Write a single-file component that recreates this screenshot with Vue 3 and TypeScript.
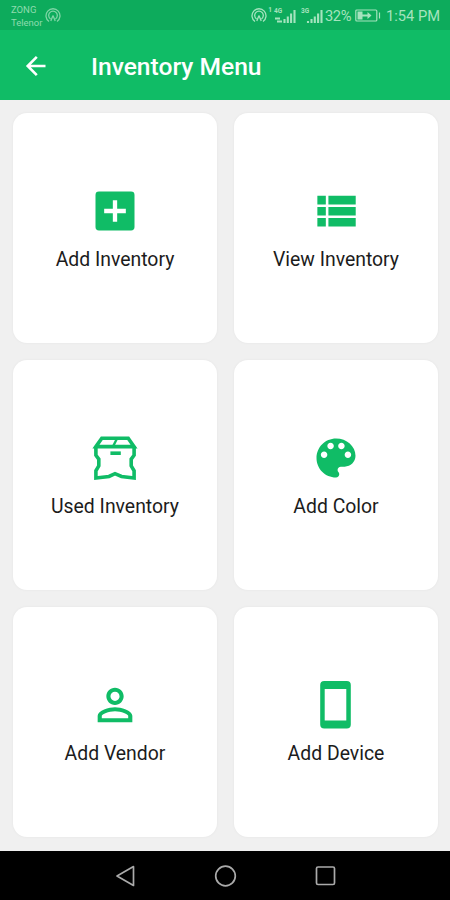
<script setup lang="ts">
type IconName = 'add' | 'list' | 'box' | 'palette' | 'person' | 'phone'

interface MenuItem {
  label: string
  icon: IconName
}

const items: MenuItem[] = [
  { label: 'Add Inventory', icon: 'add' },
  { label: 'View Inventory', icon: 'list' },
  { label: 'Used Inventory', icon: 'box' },
  { label: 'Add Color', icon: 'palette' },
  { label: 'Add Vendor', icon: 'person' },
  { label: 'Add Device', icon: 'phone' },
]
</script>

<template>
  <div class="screen">
    <div class="status">
      <div class="carriers"><span>ZONG</span><span>Telenor</span></div>
      <svg class="hotspot left" viewBox="0 0 16 16">
        <path d="M4 13.5A7 7 0 1 1 12 13.5M5.6 11A4.3 4.3 0 1 1 10.4 11M8 7.5L5.8 13M8 7.5L10.2 13" />
      </svg>
      <div class="spacer"></div>
      <svg class="hotspot" viewBox="0 0 16 16">
        <path d="M4 13.5A7 7 0 1 1 12 13.5M5.6 11A4.3 4.3 0 1 1 10.4 11M8 7.5L5.8 13M8 7.5L10.2 13" />
      </svg>
      <span class="tiny one">1</span>
      <div class="signal">
        <span class="tiny">4G</span>
        <svg viewBox="0 0 23 16"><path d="M2 10.5h5M4 13.5h5M11.5 11v4M14.8 8.5V15M18.1 5.5V15M21.5 2v13" /></svg>
      </div>
      <div class="signal second">
        <span class="tiny">3G</span>
        <svg viewBox="0 0 23 16"><path d="M8 13v2M11.5 11v4M14.8 8.5V15M18.1 5.5V15M21.5 2v13" /></svg>
      </div>
      <span class="percent">32%</span>
      <svg class="battery" viewBox="0 0 26 13">
        <rect x=".8" y="1" width="21" height="11" rx="1" />
        <path d="M24.5 3.5v6" /><path class="charge" d="M2.5 2.5h5v3h5V3l4 3.5-4 3.5V7.5h-5v3h-5z" />
      </svg>
      <span class="clock">1:54 PM</span>
    </div>

    <header class="appbar">
      <svg class="back" viewBox="0 0 24 24">
        <path d="M21.5 12H4M12.8 2.9L3.7 12l9.1 9.1" />
      </svg>
      <h1>Inventory Menu</h1>
    </header>

    <main class="grid">
      <button v-for="item in items" :key="item.label" class="card" type="button">
        <svg v-if="item.icon === 'add'" class="icon" viewBox="0 0 24 24">
          <path fill-rule="evenodd" d="M4.6 3h14.8A1.6 1.6 0 0 1 21 4.6v14.8a1.6 1.6 0 0 1-1.6 1.6H4.6A1.6 1.6 0 0 1 3 19.4V4.6A1.6 1.6 0 0 1 4.6 3zM11 7v4H7v2h4v4h2v-4h4v-2h-4V7z" />
        </svg>
        <svg v-else-if="item.icon === 'list'" class="icon" viewBox="0 0 24 24">
          <path d="M3.4 5h3.9v4H3.4zM8.5 5h12.6v4H8.5zM3.4 10.1h3.9v4H3.4zM8.5 10.1h12.6v4H8.5zM3.4 15.2h3.9v4H3.4zM8.5 15.2h12.6v4H8.5z" />
        </svg>
        <svg v-else-if="item.icon === 'box'" class="icon line" viewBox="0 0 52 52">
          <path d="M6.9 14.6L12.8 6.2h26.4L45.1 14.6zM6.9 14.6v8.6l2.9 4v6.6l-2.9 5v7.2L20 44.5l6-2.8 6.5 2.8 12.6 1.5v-7.2l-2.9-5v-6.6l2.9-4v-8.6" />
          <path class="fold" d="M28 6.5L24 14.5" />
          <path d="M21.4 21.2h10.4" />
        </svg>
        <svg v-else-if="item.icon === 'palette'" class="icon" viewBox="0 0 24 24">
          <path d="M12 3c-4.97 0-9 4.03-9 9s4.03 9 9 9c.83 0 1.5-.67 1.5-1.5 0-.39-.15-.74-.39-1.01-.23-.26-.38-.61-.38-.99 0-.83.67-1.5 1.5-1.5H16c2.76 0 5-2.24 5-5 0-4.42-4.03-8-9-8zm-5.5 9c-.83 0-1.5-.67-1.5-1.5S5.67 9 6.5 9 8 9.67 8 10.5 7.33 12 6.5 12zm3-4C8.67 8 8 7.33 8 6.5S8.67 5 9.5 5s1.5.67 1.5 1.5S10.33 8 9.5 8zm5 0c-.83 0-1.5-.67-1.5-1.5S13.67 5 14.5 5s1.5.67 1.5 1.5S15.33 8 14.5 8zm3 4c-.83 0-1.5-.67-1.5-1.5S16.67 9 17.5 9s1.5.67 1.5 1.5-.67 1.5-1.5 1.5z" />
        </svg>
        <svg v-else-if="item.icon === 'person'" class="icon" viewBox="0 0 24 24">
          <path d="M12 5.9c1.16 0 2.1.94 2.1 2.1s-.94 2.1-2.1 2.1S9.9 9.16 9.9 8s.94-2.1 2.1-2.1m0 9c2.97 0 6.1 1.46 6.1 2.1v1.1H5.9V17c0-.64 3.13-2.1 6.1-2.1M12 4C9.79 4 8 5.79 8 8s1.79 4 4 4 4-1.79 4-4-1.79-4-4-4zm0 9c-2.67 0-8 1.34-8 4v3h16v-3c0-2.66-5.33-4-8-4z" />
        </svg>
        <svg v-else class="icon" viewBox="0 0 52 52">
          <path fill-rule="evenodd" d="M14.2 2h22.6a4 4 0 0 1 4 4v39.5a4 4 0 0 1-4 4H14.2a4 4 0 0 1-4-4V6a4 4 0 0 1 4-4zM14.7 10v31.5h21.6V10z" />
        </svg>
        <span class="label">{{ item.label }}</span>
      </button>
    </main>

    <nav class="navbar">
      <svg viewBox="0 0 24 24"><path d="M20.5 2.6v18.8L4 12z" /></svg>
      <svg viewBox="0 0 24 24"><circle cx="12.5" cy="12" r="9.8" /></svg>
      <svg viewBox="0 0 24 24"><rect x="3.5" y="3" width="18" height="17.5" rx="1.5" /></svg>
    </nav>
  </div>
</template>

<style>
body {
  margin: 0;
}
</style>

<style scoped>
.screen {
  width: 450px;
  height: 900px;
  display: flex;
  flex-direction: column;
  overflow: hidden;
  background: #f0f0f0;
  font-family: Roboto, "Liberation Sans", sans-serif;
}
.status {
  height: 30px;
  flex: none;
  box-sizing: border-box;
  padding: 2px 10px 0 11px;
  display: flex;
  align-items: center;
  background: #0dab5c;
  color: #a5e3be;
}
.carriers {
  display: flex;
  flex-direction: column;
  width: 34px;
  margin-top: -1px;
  font-size: 9.5px;
  line-height: 13px;
  opacity: 0.85;
}
.spacer {
  flex: 1;
}
.status svg {
  fill: none;
  stroke: currentColor;
}
.hotspot {
  width: 16px;
  height: 16px;
  stroke-width: 1.3;
}
.hotspot.left {
  opacity: 0.75;
}
.tiny {
  font-size: 6.5px;
  line-height: 7px;
  font-weight: 700;
}
.one {
  width: 6px;
  text-align: center;
  align-self: flex-start;
  margin-top: 5px;
}
.signal {
  width: 24px;
  height: 16px;
  display: grid;
}
.signal > * {
  grid-area: 1 / 1;
}
.signal svg {
  width: 23px;
  height: 16px;
  stroke-width: 2.1;
}
.signal .tiny {
  margin-left: 1px;
}
.second {
  margin-left: 3px;
}
.percent {
  width: 27px;
  margin-left: 1px;
  font-size: 14.7px;
  letter-spacing: -0.4px;
}
.battery {
  width: 26px;
  height: 13px;
  margin-left: 3px;
  margin-top: -1px;
  stroke-width: 1.2;
}
.status .charge {
  fill: currentColor;
  stroke: none;
}
.clock {
  margin-left: 5px;
  width: 54px;
  font-size: 14.7px;
  white-space: nowrap;
}
.appbar {
  height: 70px;
  flex: none;
  box-sizing: border-box;
  padding: 3px 24px 0;
  display: flex;
  align-items: center;
  gap: 43px;
  background: #10bc66;
  color: #fff;
}
.back {
  width: 24px;
  height: 24px;
  margin-bottom: 2px;
  fill: none;
  stroke: currentColor;
  stroke-width: 2.6;
}
h1 {
  margin: 0;
  font-size: 24.6px;
  line-height: 30px;
  font-weight: 500;
}
.grid {
  height: 751px;
  flex: none;
  box-sizing: border-box;
  padding: 13px 12px 14px 13px;
  display: grid;
  grid-template-columns: 1fr 1fr;
  grid-template-rows: repeat(3, 1fr);
  gap: 17px;
}
.card {
  border: 0;
  border-radius: 14px;
  padding: 1px 0 0;
  background: #fff;
  box-shadow: 0 0 3px rgba(0, 0, 0, 0.05);
  display: flex;
  flex-direction: column;
  align-items: center;
  justify-content: center;
  gap: 11px;
  font-family: inherit;
  color: #1c1c1c;
}
.icon {
  width: 52px;
  height: 52px;
  fill: #10bc66;
}
.line {
  fill: none;
  stroke: #10bc66;
  stroke-width: 3.6;
}
.fold {
  stroke-width: 2.4;
}
.label {
  font-size: 19.4px;
  line-height: 24px;
}
.navbar {
  flex: 1;
  display: flex;
  align-items: center;
  justify-content: center;
  gap: 76px;
  background: #000;
}
.navbar svg {
  width: 24px;
  height: 24px;
  fill: none;
  stroke: #aaa;
  stroke-width: 1.7;
  stroke-linejoin: round;
}
</style>
